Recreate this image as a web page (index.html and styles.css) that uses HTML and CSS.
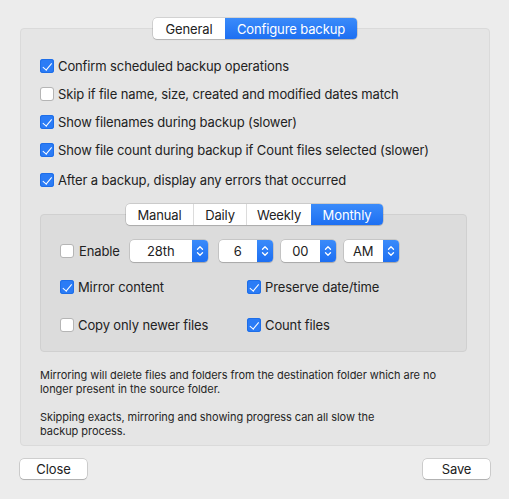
FILE: index.html
```html
<!DOCTYPE html>
<html>
<head>
<meta charset="utf-8">
<link rel="stylesheet" href="styles.css">
</head>
<body>
<div class="window">
  <div class="tabs-wrap">
    <div class="seg top-seg">
      <span class="seg-item w-general">General</span>
      <span class="seg-item sel w-config">Configure backup</span>
    </div>
  </div>
  <div class="panel">
    <div class="opts">
      <label class="row"><span class="cb on"></span><span>Confirm scheduled backup operations</span></label>
      <label class="row"><span class="cb"></span><span>Skip if file name, size, created and modified dates match</span></label>
      <label class="row"><span class="cb on"></span><span>Show filenames during backup (slower)</span></label>
      <label class="row"><span class="cb on"></span><span>Show file count during backup if Count files selected (slower)</span></label>
      <label class="row last"><span class="cb on"></span><span>After a backup, display any errors that occurred</span></label>
    </div>

    <div class="tabs-wrap inner-tabs">
      <div class="seg">
        <span class="seg-item w-manual">Manual</span>
        <span class="seg-item w-daily">Daily</span>
        <span class="seg-item w-weekly">Weekly</span>
        <span class="seg-item sel w-monthly">Monthly</span>
      </div>
    </div>
    <div class="inner">
      <div class="sched">
        <label class="row enable"><span class="cb"></span><span>Enable</span></label>
        <div class="popup p-day"><span class="pv">28th</span><span class="arr"><svg width="8" height="12" viewBox="0 0 8 12"><path d="M1.5 4.2 L4 1.8 L6.5 4.2 M1.5 7.8 L4 10.2 L6.5 7.8" fill="none" stroke="#fff" stroke-width="1.3" stroke-linecap="round" stroke-linejoin="round"/></svg></span></div>
        <div class="popup p-hour"><span class="pv">6</span><span class="arr"><svg width="8" height="12" viewBox="0 0 8 12"><path d="M1.5 4.2 L4 1.8 L6.5 4.2 M1.5 7.8 L4 10.2 L6.5 7.8" fill="none" stroke="#fff" stroke-width="1.3" stroke-linecap="round" stroke-linejoin="round"/></svg></span></div>
        <div class="popup p-min"><span class="pv">00</span><span class="arr"><svg width="8" height="12" viewBox="0 0 8 12"><path d="M1.5 4.2 L4 1.8 L6.5 4.2 M1.5 7.8 L4 10.2 L6.5 7.8" fill="none" stroke="#fff" stroke-width="1.3" stroke-linecap="round" stroke-linejoin="round"/></svg></span></div>
        <div class="popup p-ampm"><span class="pv">AM</span><span class="arr"><svg width="8" height="12" viewBox="0 0 8 12"><path d="M1.5 4.2 L4 1.8 L6.5 4.2 M1.5 7.8 L4 10.2 L6.5 7.8" fill="none" stroke="#fff" stroke-width="1.3" stroke-linecap="round" stroke-linejoin="round"/></svg></span></div>
      </div>
      <div class="grid">
        <label class="row"><span class="cb on"></span><span>Mirror content</span></label>
        <label class="row"><span class="cb on"></span><span>Preserve date/time</span></label>
        <label class="row"><span class="cb"></span><span>Copy only newer files</span></label>
        <label class="row"><span class="cb on"></span><span>Count files</span></label>
      </div>
    </div>

    <p class="note">Mirroring will delete files and folders from the destination folder which are no<br>longer present in the source folder.</p>
    <p class="note second">Skipping exacts, mirroring and showing progress can all slow the<br>backup process.</p>
  </div>
  <div class="buttons">
    <button class="btn">Close</button>
    <button class="btn">Save</button>
  </div>
</div>
</body>
</html>
```

FILE: styles.css
```css
* { box-sizing: border-box; }
html, body { margin: 0; padding: 0; }
body {
  background: #ececec;
  font-family: Inter, "Liberation Sans", sans-serif;
  font-size: 13px;
  letter-spacing: -0.12px;
  color: #222;
  width: 509px;
  height: 499px;
  overflow: hidden;
}
.window { padding: 18px 19px 0 20px; }

.tabs-wrap {
  display: flex;
  justify-content: center;
  position: relative;
  z-index: 2;
}
.seg {
  display: flex;
  height: 21px;
  background: #fff;
  border-radius: 4px;
  box-shadow: 0 0 0 0.5px rgba(0,0,0,0.22), 0 1px 1px rgba(0,0,0,0.12);
  overflow: hidden;
}
.seg-item {
  display: flex;
  align-items: center;
  justify-content: center;
  height: 21px;
  border-left: 1px solid #dcdcdc;
  color: #222;
  white-space: nowrap;
}
.seg-item:first-child { border-left: none; }
.seg-item.sel {
  background: linear-gradient(#3a8bfa, #1d6ff2);
  color: #fff;
  border-left: none;
}
.w-general { width: 72px; }
.w-config { width: 132px; }
.w-manual { width: 67px; }
.w-daily { width: 53px; }
.w-weekly { width: 65px; }
.w-monthly { width: 72px; }

.panel {
  margin-top: -11px;
  width: 470px;
  height: 418px;
  background: #e5e5e5;
  border: 1px solid #dadada;
  border-radius: 4px;
  padding: 23px 22px 0 19px;
}
.opts { display: flex; flex-direction: column; }
.row {
  display: flex;
  align-items: center;
  height: 28px;
  white-space: nowrap;
}
.row.last { margin-top: 2px; }
.cb {
  width: 14px;
  height: 14px;
  border-radius: 3px;
  background: #fff;
  box-shadow: inset 0 0 0 1px #b5b5b5;
  margin-right: 4px;
  flex: none;
  position: relative;
}
.cb.on {
  background: #2b7cf6;
  box-shadow: inset 0 0 0 1px #1e6ee8;
}
.cb.on::after {
  content: "";
  position: absolute;
  left: 4.6px;
  top: 1.6px;
  width: 3.5px;
  height: 7.5px;
  border: solid #fff;
  border-width: 0 1.5px 1.5px 0;
  transform: rotate(40deg);
}

.inner-tabs { margin-top: 10px; margin-right: -2px; }
.inner {
  margin-top: -11px;
  width: 427px;
  height: 138px;
  background: #dcdcdc;
  border: 1px solid #d0d0d0;
  border-radius: 4px;
  padding: 25px 0 0 19px;
}
.sched { display: flex; align-items: center; height: 22px; }
.row.enable { height: 22px; margin-right: 10px; }
.row.enable .cb { margin-right: 5px; }
.popup {
  display: flex;
  height: 22px;
  background: #fff;
  border-radius: 4px;
  box-shadow: 0 0 0 0.5px rgba(0,0,0,0.2), 0 1px 1px rgba(0,0,0,0.15);
  overflow: hidden;
  margin-right: 8px;
}
.popup .pv {
  flex: 1;
  display: flex;
  align-items: center;
  justify-content: center;
}
.popup .arr {
  width: 16px;
  background: linear-gradient(#3a8bfa, #1d6ff2);
  display: flex;
  align-items: center;
  justify-content: center;
}
.p-day { width: 78px; margin-right: 11px; }
.p-hour { width: 54px; }
.p-min { width: 55px; }
.p-ampm { width: 55px; }

.grid {
  display: grid;
  grid-template-columns: 187px 1fr;
  grid-template-rows: 24px 24px;
  row-gap: 14px;
  margin-top: 13px;
}
.grid .row { height: 24px; }

.note {
  margin: 16px 0 0 0;
  font-size: 11px;
  letter-spacing: -0.05px;
  line-height: 14px;
  color: #262626;
  white-space: nowrap;
}
.note.second { margin-top: 14px; }

.buttons {
  display: flex;
  justify-content: space-between;
  margin-top: 13px;
  width: 470px;
}
.btn {
  width: 67px;
  height: 20px;
  background: #fff;
  border: none;
  border-radius: 4px;
  box-shadow: 0 0 0 0.5px rgba(0,0,0,0.25), 0 1px 1px rgba(0,0,0,0.15);
  font-family: Inter, "Liberation Sans", sans-serif;
  font-size: 13px;
  letter-spacing: -0.12px;
  color: #222;
  padding: 0;
}
```
